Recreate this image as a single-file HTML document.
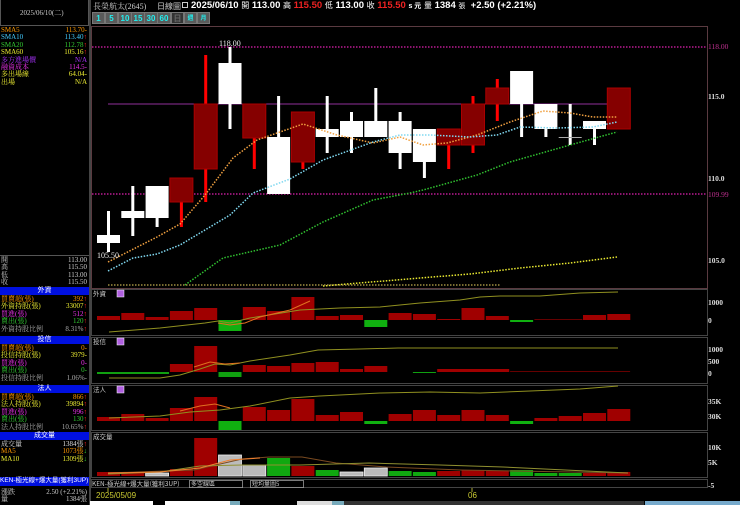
<!DOCTYPE html>
<html><head><meta charset="utf-8">
<style>
*{margin:0;padding:0;box-sizing:border-box}
body{width:740px;height:505px;background:#000;position:relative;overflow:hidden;font-family:"Liberation Sans","Noto Sans CJK TC",sans-serif;color:#ddd}
.a{position:absolute;white-space:nowrap}
.s{font-size:7px;line-height:7.4px;font-family:"Liberation Serif","Noto Serif CJK SC",serif}
.r{text-align:right}
.hdr{position:absolute;left:0;width:89px;height:8px;background:#0010e0;color:#fff;font-size:7px;line-height:8px;text-align:center}
.btn{position:absolute;top:12px;height:12px;width:13px;background:#5a5a5a;color:#2ee;font-size:8px;line-height:12px;text-align:center;font-weight:bold;border:1px solid #777}
</style></head><body>
<!-- left panel -->
<div class="a" style="left:0;top:0;width:89px;height:26px;border:1px solid #555;border-top:none"></div>
<div class="a s" style="left:20px;top:10px;color:#ccc">2025/06/10(二)</div>
<div class="a" style="left:89px;top:0;width:2px;height:505px;background:#444"></div>
<div class="a s" style="left:1px;top:27px;width:86px">
<div style="color:#f90">SMA5<span style="float:right">113.70-</span></div>
<div style="color:#4cf">SMA10<span style="float:right">113.40<b style="color:#f22">↑</b></span></div>
<div style="color:#3c3">SMA20<span style="float:right">112.78<b style="color:#f22">↑</b></span></div>
<div style="color:#ee3">SMA60<span style="float:right">105.16<b style="color:#f22">↑</b></span></div>
<div style="color:#a3f">多方進場價<span style="float:right">N/A</span></div>
<div style="color:#e3e">融資成本<span style="float:right">114.5-</span></div>
<div style="color:#ee3">多出場線<span style="float:right">64.04-</span></div>
<div style="color:#ee3">出場<span style="float:right">N/A</span></div>
</div>
<div class="a" style="left:0;top:255px;width:89px;height:1px;background:#555"></div>
<div class="a s" style="left:1px;top:257px;width:86px;color:#ccc">
<div>開<span style="float:right">113.00</span></div><div>高<span style="float:right">115.50</span></div>
<div>低<span style="float:right">113.00</span></div><div>收<span style="float:right">115.50</span></div></div>
<div class="hdr" style="top:287px">外資</div>
<div class="a s" style="left:1px;top:296px;width:86px">
<div style="color:#f90">買賣超(張)<span style="float:right">392<b style="color:#f22">↑</b></span></div>
<div style="color:#ee3">外資持股(張)<span style="float:right">33007<b style="color:#f22">↑</b></span></div>
<div style="color:#e3e">買進(張)<span style="float:right">512<b style="color:#f22">↑</b></span></div>
<div style="color:#3c3">賣出(張)<span style="float:right">120<b style="color:#f22">↑</b></span></div>
<div style="color:#aaa">外資持股比例<span style="float:right">8.31%<b style="color:#f22">↑</b></span></div></div>
<div class="hdr" style="top:336px">投信</div>
<div class="a s" style="left:1px;top:345px;width:86px">
<div style="color:#f90">買賣超(張)<span style="float:right">0-</span></div>
<div style="color:#ee3">投信持股(張)<span style="float:right">3979-</span></div>
<div style="color:#e3e">買進(張)<span style="float:right">0-</span></div>
<div style="color:#3c3">賣出(張)<span style="float:right">0-</span></div>
<div style="color:#aaa">投信持股比例<span style="float:right">1.06%-</span></div></div>
<div class="hdr" style="top:385px">法人</div>
<div class="a s" style="left:1px;top:394px;width:86px">
<div style="color:#f90">買賣超(張)<span style="float:right">866<b style="color:#f22">↑</b></span></div>
<div style="color:#ee3">法人持股(張)<span style="float:right">39894<b style="color:#f22">↑</b></span></div>
<div style="color:#e3e">買進(張)<span style="float:right">996<b style="color:#f22">↑</b></span></div>
<div style="color:#3c3">賣出(張)<span style="float:right">130<b style="color:#f22">↑</b></span></div>
<div style="color:#aaa">法人持股比例<span style="float:right">10.65%<b style="color:#f22">↑</b></span></div></div>
<div class="hdr" style="top:432px">成交量</div>
<div class="a s" style="left:1px;top:441px;width:86px">
<div style="color:#ddd">成交量<span style="float:right">1384張<b style="color:#f22">↑</b></span></div>
<div style="color:#f90">MA5<span style="float:right">1073張<b style="color:#3c3">↓</b></span></div>
<div style="color:#ee3">MA10<span style="float:right">1309張<b style="color:#3c3">↓</b></span></div></div>
<div class="hdr" style="top:477px;height:9px;text-align:left;font-size:6.5px">KEN-極光線+爆大量(獲利3UP)</div>
<div class="a s" style="left:1px;top:489px;width:86px;color:#ccc">
<div>漲跌<span style="float:right">2.50 (+2.21%)</span></div><div>量<span style="float:right">1384張</span></div></div>

<!-- top bar -->
<div class="a" style="left:93px;top:1px;font-size:8px;color:#ccc;font-family:'Liberation Serif','Noto Serif CJK SC',serif">長榮航太(2645)</div>
<div class="a" style="left:157px;top:1px;font-size:8px;color:#ccc">日線圖</div>
<div class="a" style="left:182px;top:2px;width:6px;height:6px;border:1px solid #ccc"></div>
<div class="a" style="left:191px;top:0;font-size:9.5px;font-weight:bold;color:#fff">2025/06/10 <span style="font-weight:normal;font-size:8px">開</span> 113.00 <span style="font-weight:normal;font-size:8px">高</span> <span style="color:#e22">115.50</span> <span style="font-weight:normal;font-size:8px">低</span> 113.00 <span style="font-weight:normal;font-size:8px">收</span> <span style="color:#e22">115.50</span> <span style="font-size:7px">s 元</span> <span style="font-weight:normal;font-size:8px">量</span> 1384 <span style="font-weight:normal;font-size:7px">張</span> &nbsp;+2.50 (+2.21%)</div>
<div class="btn" style="left:92px">1</div><div class="btn" style="left:105px">5</div>
<div class="btn" style="left:118px;width:14px">10</div><div class="btn" style="left:131px;width:14px">15</div>
<div class="btn" style="left:144px;width:14px">30</div><div class="btn" style="left:157px;width:14px">60</div>
<div class="btn" style="left:171px;width:13px;background:#333;color:#666">日</div>
<div class="btn" style="left:184px;background:#5a5a5a;color:#2ee;font-size:6px">週</div>
<div class="btn" style="left:197px;font-size:6px">月</div>

<svg class="a" style="left:0;top:0" width="740" height="505">
<g fill="none" stroke="#5a3a40" stroke-width="1">
<rect x="91.5" y="26.5" width="616" height="262"/>
</g>
<g stroke="#555"><rect x="91.5" y="289.5" width="491" height="0" /></g>
<g fill="none" stroke="#444">
<rect x="91.5" y="289.5" width="616" height="46"/>
<rect x="91.5" y="337.5" width="616" height="46"/>
<rect x="91.5" y="385.5" width="616" height="45"/>
<rect x="91.5" y="432.5" width="616" height="45"/>
<rect x="91.5" y="479.5" width="616" height="8"/>
</g>
<!-- ref lines -->
<line x1="92" y1="47" x2="707" y2="47" stroke="#e020b0" stroke-width="1.3" stroke-dasharray="1.5 1.5"/>
<line x1="92" y1="194" x2="707" y2="194" stroke="#e020b0" stroke-width="1.3" stroke-dasharray="1.5 1.5"/>
<line x1="108" y1="104" x2="618" y2="104" stroke="#90309a" stroke-width="1"/>
<!-- candles -->
<g fill="#fff">
<rect x="107" y="211" width="3" height="41"/><rect x="97" y="235" width="23" height="8"/>
<rect x="131.3" y="186" width="3" height="50"/><rect x="121.3" y="211" width="23" height="7"/>
<rect x="155.6" y="186" width="3" height="41"/><rect x="145.6" y="186" width="23" height="32"/>
<rect x="228.5" y="47" width="3" height="82"/><rect x="218.5" y="63" width="23" height="41"/>
<rect x="277.1" y="96" width="3" height="98"/><rect x="267.1" y="137" width="23" height="57"/>
<rect x="325.7" y="96" width="3" height="57"/><rect x="315.7" y="129" width="23" height="8"/>
<rect x="350" y="112" width="3" height="41"/><rect x="340" y="121" width="23" height="16"/>
<rect x="374.3" y="88" width="3" height="49"/><rect x="364.3" y="121" width="23" height="16"/>
<rect x="398.6" y="112" width="3" height="57"/><rect x="388.6" y="121" width="23" height="32"/>
<rect x="422.9" y="129" width="3" height="49"/><rect x="412.9" y="129" width="23" height="33"/>
<rect x="520.1" y="71" width="3" height="66"/><rect x="510.1" y="71" width="23" height="33"/>
<rect x="544.4" y="104" width="3" height="33"/><rect x="534.4" y="104" width="23" height="25"/>
<rect x="568.7" y="104" width="3" height="41"/><rect x="558.7" y="137" width="23" height="1" fill="#aaa"/>
<rect x="593" y="121" width="3" height="24"/><rect x="583" y="121" width="23" height="8"/>
</g>
<g fill="#f00">
<rect x="179.9" y="178" width="3" height="49"/><rect x="204.2" y="55" width="3" height="147"/>
<rect x="252.8" y="104" width="3" height="65"/><rect x="301.4" y="112" width="3" height="57"/>
<rect x="447.2" y="129" width="3" height="40"/><rect x="471.5" y="96" width="3" height="57"/>
<rect x="495.8" y="79" width="3" height="42"/>
</g>
<g fill="#850000" stroke="#a00" stroke-width="1">
<rect x="169.9" y="178" width="23" height="24"/><rect x="194.2" y="104" width="23" height="65"/>
<rect x="242.8" y="104" width="23" height="34"/><rect x="291.4" y="112" width="23" height="50"/>
<rect x="437.2" y="129" width="23" height="16"/><rect x="461.5" y="104" width="23" height="41"/>
<rect x="485.8" y="88" width="23" height="16"/><rect x="607.3" y="88" width="23" height="41"/>
</g>
<!-- MAs -->
<g fill="none" stroke-width="1.5" stroke-dasharray="1.5 1.5">
<polyline stroke="#f0a040" points="108,262 157,237 180,224 205,195 233,158 257,140 303,124 337,135 373,143 400,137 423,145 447,143 477,135 510,122 543,111 570,113 593,117 617,117"/>
<polyline stroke="#80d8f0" points="108,271 133,258 157,254 180,245 230,215 253,193 290,179 323,160 373,142 400,135 430,135 470,137 497,135 520,127 557,128 593,127 617,122"/>
<polyline stroke="#30c030" points="185,285 223,258 280,245 323,222 373,200 410,193 423,190 477,175 510,162 570,145 617,132"/>
<polyline stroke="#e8e830" points="323,286 420,278 470,274 520,268 570,263 617,257"/>
<line x1="108" y1="285" x2="500" y2="285" stroke="#a09040"/>
</g>
<text x="219" y="46" font-size="8" fill="#eee" font-family="Liberation Serif">118.00</text>
<text x="97" y="258" font-size="8" fill="#eee" font-family="Liberation Serif">105.50</text>
<g font-size="7.5" font-family="Liberation Serif" font-weight="bold" fill="#ddd">
<text x="708" y="49" fill="#c03090" font-weight="normal">118.00</text>
<text x="708" y="99">115.0</text><text x="708" y="181">110.0</text>
<text x="708" y="197" fill="#c03090" font-weight="normal">109.99</text>
<text x="708" y="263">105.0</text>
<text x="708" y="305">1000</text><text x="708" y="323">0</text>
<text x="708" y="352">1000</text><text x="708" y="364">500</text><text x="708" y="376">0</text>
<text x="708" y="404">35K</text><text x="708" y="419">30K</text>
<text x="708" y="450">10K</text><text x="708" y="465">5K</text><text x="708" y="488">-5</text>
</g>
<!-- panel titles -->
<g font-size="6.5" fill="#ccc" font-family="Noto Sans CJK TC">
<text x="93" y="296">外資</text><text x="93" y="344">投信</text><text x="93" y="392">法人</text><text x="93" y="439">成交量</text>
</g>
<g fill="#b060e0" stroke="#fff" stroke-width="0.5"><rect x="117" y="290" width="7" height="7"/><rect x="117" y="338" width="7" height="7"/><rect x="117" y="386" width="7" height="7"/></g>
<!-- 外資 bars -->
<g fill="#a00000">
<rect x="97" y="316" width="23" height="4"/><rect x="121.3" y="313" width="23" height="7"/><rect x="145.6" y="317" width="23" height="3"/>
<rect x="169.9" y="311" width="23" height="9"/><rect x="194.2" y="308" width="23" height="12"/><rect x="242.8" y="307" width="23" height="13"/>
<rect x="267.1" y="311" width="23" height="9"/><rect x="291.4" y="297" width="23" height="23"/><rect x="315.7" y="316" width="23" height="4"/>
<rect x="340" y="315" width="23" height="5"/><rect x="388.6" y="313" width="23" height="7"/><rect x="412.9" y="314" width="23" height="6"/>
<rect x="437.2" y="319" width="23" height="1"/><rect x="461.5" y="308" width="23" height="12"/><rect x="485.8" y="316" width="23" height="4"/>
<rect x="534.4" y="319" width="48" height="1" fill="#600"/><rect x="583" y="315" width="23" height="5"/><rect x="607.3" y="314" width="23" height="6"/>
</g>
<g fill="#10b010"><rect x="218.5" y="320" width="23" height="11"/><rect x="364.3" y="320" width="23" height="7"/><rect x="510.1" y="320" width="23" height="2"/></g>
<polyline fill="none" stroke="#909020" points="109,332 160,328 205,323 218,321 230,323 250,318 300,310 340,308 380,307 420,303 460,300 480,297 500,296 540,296 580,293 618,292"/>
<polyline fill="none" stroke="#e07020" points="218,323 230,325 245,323 260,317 290,310 310,301"/>
<!-- 投信 bars -->
<g fill="#a00000">
<rect x="169.9" y="364" width="23" height="8"/><rect x="194.2" y="346" width="23" height="26"/><rect x="242.8" y="365" width="23" height="7"/>
<rect x="267.1" y="366" width="23" height="6"/><rect x="291.4" y="363" width="23" height="9"/><rect x="315.7" y="362" width="23" height="10"/>
<rect x="340" y="369" width="23" height="3"/><rect x="364.3" y="366" width="23" height="6"/>
<rect x="437.2" y="369" width="72" height="3"/><rect x="510.1" y="371" width="120" height="1" fill="#600"/>
</g>
<g fill="#10a010"><rect x="97" y="372" width="72" height="2"/><rect x="218.5" y="372" width="23" height="5"/><rect x="412.9" y="372" width="23" height="1"/></g>
<polyline fill="none" stroke="#909020" points="109,378 160,378 180,375 200,369 215,364 230,365 250,361 290,355 318,350 360,349 398,348 618,348"/>
<polyline fill="none" stroke="#e07020" points="194,367 210,362 225,364 240,363"/>
<!-- 法人 bars -->
<g fill="#a00000">
<rect x="97" y="417" width="23" height="4"/><rect x="121.3" y="414" width="23" height="7"/><rect x="145.6" y="418" width="23" height="3"/>
<rect x="169.9" y="408" width="23" height="13"/><rect x="194.2" y="397" width="23" height="24"/><rect x="242.8" y="407" width="23" height="14"/>
<rect x="267.1" y="410" width="23" height="11"/><rect x="291.4" y="399" width="23" height="22"/><rect x="315.7" y="415" width="23" height="6"/>
<rect x="340" y="412" width="23" height="9"/><rect x="388.6" y="414" width="23" height="7"/><rect x="412.9" y="410" width="23" height="11"/>
<rect x="437.2" y="415" width="23" height="6"/><rect x="461.5" y="410" width="23" height="11"/><rect x="485.8" y="415" width="23" height="6"/>
<rect x="534.4" y="418" width="23" height="3"/><rect x="558.7" y="416" width="23" height="5"/><rect x="583" y="413" width="23" height="8"/><rect x="607.3" y="409" width="23" height="12"/>
</g>
<g fill="#10b010"><rect x="218.5" y="421" width="23" height="9"/><rect x="364.3" y="421" width="23" height="3"/><rect x="510.1" y="421" width="23" height="3"/></g>
<polyline fill="none" stroke="#909020" points="109,418 160,416 190,412 220,410 250,406 290,398 320,396 380,393 430,392 480,393 530,391 580,389 618,386"/>
<polyline fill="none" stroke="#e07020" points="180,411 200,406 215,404 230,408"/>
<!-- volume -->
<g fill="#a00000">
<rect x="97" y="472" width="23" height="4"/><rect x="121.3" y="472" width="23" height="4"/><rect x="169.9" y="469" width="23" height="7"/>
<rect x="194.2" y="438" width="23" height="38"/><rect x="291.4" y="466" width="23" height="10"/><rect x="437.2" y="471" width="23" height="5"/>
<rect x="461.5" y="470" width="23" height="6"/><rect x="485.8" y="471" width="23" height="5"/><rect x="583" y="473" width="23" height="3"/><rect x="607.3" y="472" width="23" height="4"/>
</g>
<g fill="#bbb" stroke="#eee" stroke-width="0.8">
<rect x="145.6" y="473" width="23" height="3"/><rect x="218.5" y="455" width="23" height="21"/><rect x="242.8" y="465" width="23" height="11"/>
<rect x="340" y="472" width="23" height="4"/><rect x="364.3" y="468" width="23" height="8"/>
</g>
<g fill="#10a810">
<rect x="267.1" y="458" width="23" height="18"/><rect x="315.7" y="470" width="23" height="6"/><rect x="388.6" y="471" width="23" height="5"/>
<rect x="412.9" y="472" width="23" height="4"/><rect x="510.1" y="470" width="23" height="6"/><rect x="534.4" y="473" width="23" height="3"/><rect x="558.7" y="473" width="23" height="3"/>
</g>
<polyline fill="none" stroke="#7a4a20" points="108,473 194,470 242,459 269,457 302,457 336,463 386,467 461,470 628,473"/>
<polyline fill="none" stroke="#909030" points="108,474 160,472 200,466 242,465 300,465 369,463 440,465 503,467 628,473"/>
<polyline fill="none" stroke="#f08030" points="108,473 160,472 200,468 230,460 260,458"/>
<!-- bottom bar -->
<text x="92" y="486" font-size="6.5" fill="#ccc" font-family="Noto Sans CJK TC">KEN-極光線+爆大量(獲利3UP)</text>
<rect x="189.5" y="480.5" width="53" height="7" fill="#000" stroke="#ccc" stroke-width="0.6"/>
<text x="191" y="486" font-size="6" fill="#ccc" font-family="Noto Sans CJK TC">多空線區</text>
<rect x="250.5" y="480.5" width="53" height="7" fill="#000" stroke="#ccc" stroke-width="0.6"/>
<text x="252" y="486" font-size="6" fill="#ccc" font-family="Noto Sans CJK TC">短均量圖5</text>
<line x1="108" y1="488" x2="108" y2="492" stroke="#aa3"/><line x1="472" y1="488" x2="472" y2="492" stroke="#aa3"/>
<text x="96" y="498" font-size="8" fill="#cc3">2025/05/09</text>
<text x="468" y="498" font-size="8" fill="#cc3">06</text>
<rect x="90" y="501" width="63" height="4" fill="#fff"/><rect x="165" y="501" width="65" height="4" fill="#fff"/>
<rect x="230" y="501" width="10" height="4" fill="#7ab"/>
<rect x="297" y="501" width="35" height="4" fill="#ddd"/><rect x="332" y="501" width="12" height="4" fill="#7ab"/>
<rect x="344" y="501" width="300" height="4" fill="#333"/>
<rect x="645" y="501" width="95" height="4" fill="#7ac"/>
</svg>
</body></html>
